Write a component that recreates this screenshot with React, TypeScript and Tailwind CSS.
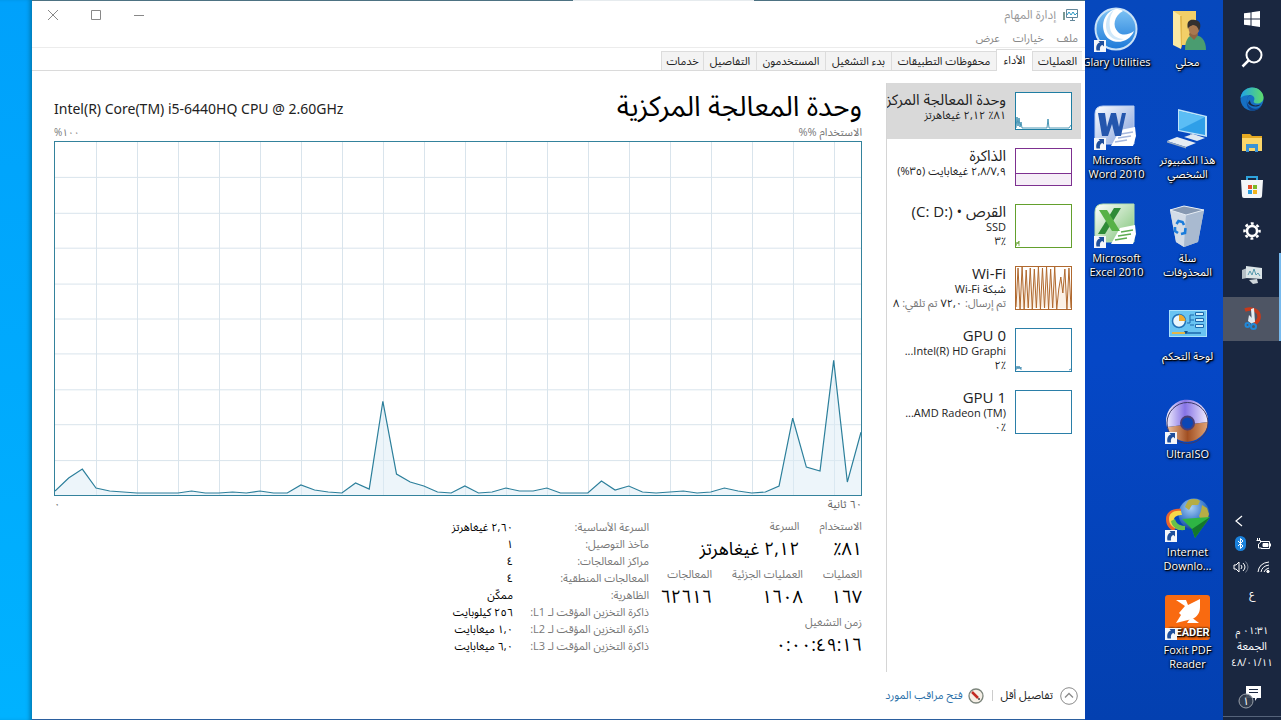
import type { ReactNode } from 'react';

const CPU = [
  4, 17, 26, 7, 4, 3, 2, 2, 2, 2, 4, 2, 2, 3, 2, 4, 2, 2, 10, 5, 3, 2, 12, 6, 94, 21, 13, 9, 3, 2,
  9, 2, 3, 7, 4, 4, 7, 2, 2, 2, 14, 5, 9, 3, 2, 3, 4, 2, 3, 7, 4, 2, 3, 9, 77, 28, 24, 135, 13, 63,
];

const WIFI = [40, 1, 42, 0, 42, 3, 41, 1, 42, 2, 41, 0, 42, 1, 41, 0, 42, 2, 41, 0, 42, 22, 10, 26, 2, 42, 1, 41];

const TABS = [
  { label: 'العمليات', width: 'w-[50px]' },
  { label: 'الأداء', width: 'w-[36px]', active: true },
  { label: 'محفوظات التطبيقات', width: 'w-[105px]' },
  { label: 'بدء التشغيل', width: 'w-[66px]' },
  { label: 'المستخدمون', width: 'w-[69px]' },
  { label: 'التفاصيل', width: 'w-[53px]' },
  { label: 'خدمات', width: 'w-[42px]' },
];

const DETAILS = [
  ['السرعة الأساسية:', '٢,٦٠ غيغاهرتز'],
  ['مآخذ التوصيل:', '١'],
  ['مراكز المعالجات:', '٤'],
  ['المعالجات المنطقية:', '٤'],
  ['الظاهرية:', 'ممكّن'],
  ['ذاكرة التخزين المؤقت لـ L1:', '٢٥٦ كيلوبايت'],
  ['ذاكرة التخزين المؤقت لـ L2:', '١,٠ ميغابايت'],
  ['ذاكرة التخزين المؤقت لـ L3:', '٦,٠ ميغابايت'],
];

function Shortcut() {
  return (
    <g>
      <rect x="0" y="33" width="12" height="12" fill="#f4f6fa" />
      <path d="M2.500 43.500c-1-4.500 1-7.500 3.500-8L4.500 34H10v5.500L8.500 38c-2 .5-3 2-2.500 5.500z" fill="#1f4f9c" />
    </g>
  );
}

function GlaryIcon() {
  return (
    <svg width="46" height="46" viewBox="0 0 46 46">
      <defs>
        <linearGradient id="gl" x1="0" y1="0" x2="0" y2="1">
          <stop offset="0" stopColor="#7fc4f5" />
          <stop offset="1" stopColor="#1c79d8" />
        </linearGradient>
      </defs>
      <circle cx="22" cy="22" r="20.500" fill="url(#gl)" stroke="#c9e2f7" strokeWidth="2" />
      <path d="M22 2C8 5 5 24 15 32c9 6 21 2 25-8-5 4-12 5-16 1-6-6-4-16 5-21-2-1.500-5-2-7-2z" fill="#fff" />
      <path d="M20 3C11 9 9 23 17 30c3 3 9 4 13 2-7 0-13-4-14-11-1-7 0-13 4-18z" fill="#cfe8fa" />
      <Shortcut />
    </svg>
  );
}

function UserFolderIcon() {
  return (
    <svg width="46" height="46" viewBox="0 0 46 46">
      <path d="M8 4h23v34H8z" fill="#f2cf68" />
      <path d="M8 4l8 5v33l-8-4z" fill="#fbe9a4" />
      <path d="M15 9h2v30l-1 3z" fill="#e3b94c" />
      <path d="M20 43c0-9 3-15 9-15 7 0 12 5 12 15z" fill="#4a9c70" />
      <path d="M24 28l5 5 4-5-1-4h-7z" fill="#8f6442" />
      <ellipse cx="29" cy="21" rx="5.500" ry="7" fill="#a87850" />
      <path d="M23 22c-2-8 2-10 7-9 5 0 7 5 4 11-1-4-3-6-6-6-2 1-4 1-5 4z" fill="#33302f" />
    </svg>
  );
}

function OfficeIcon({ letter }: { letter: 'W' | 'X' }) {
  const word = letter === 'W';
  return (
    <svg width="46" height="46" viewBox="0 0 46 46">
      <defs>
        <linearGradient id={`of${letter}`} x1="0" y1="0" x2="1" y2="1">
          <stop offset="0" stopColor="#fff" />
          <stop offset="1" stopColor={word ? '#7f9edb' : '#7cc274'} />
        </linearGradient>
      </defs>
      <path d="M9 1h31v38H1V9q0-8 8-8z" fill={`url(#of${letter})`} stroke={word ? '#b9cdf0' : '#b5dfae'} />
      <path d="M26 25l15-3 1 9-3 10H17z" fill="#fff" />
      <path d="M27 29l12-2M24 33l13-2M21 37l12-2" stroke={word ? '#a7b8dd' : '#5cab52'} strokeWidth="1.500" />
      {word ? (
        <path d="M4 8h7l2 14 4-14h5l3 14 3-14h4l-5 23h-6l-3-12-4 12H8z" fill="#2456ad" />
      ) : (
        <>
          <path d="M20 5h7L11 31H4z" fill="#2e8b37" />
          <path d="M5 7h8l13 21h-8z" fill="#57b147" />
        </>
      )}
      <Shortcut />
    </svg>
  );
}

function ComputerIcon() {
  return (
    <svg width="46" height="46" viewBox="0 0 46 46">
      <path d="M13 4l29 7v21l-29-6z" fill="#bfe3f8" />
      <path d="M14 6l26 6v18l-26-5z" fill="#2f9fe8" />
      <path d="M14 6l26 6-26 13z" fill="#5bbdf5" />
      <path d="M25 29l7 1.500v3l-7-1.500z" fill="#8fa6bf" />
      <path d="M19 32l9-3 12 4-8 3z" fill="#dfe8f1" />
      <path d="M2 36l10-4 19 6-10 4z" fill="#e7edf3" />
      <path d="M2 36l19 6v1.500L2 37.500z" fill="#9aacbf" />
    </svg>
  );
}

function BinIcon() {
  return (
    <svg width="46" height="46" viewBox="0 0 46 46">
      <path d="M5 7l14-4 20 4-6 32-14 5-8-5z" fill="#bccbdd" />
      <path d="M5 7l16 5-2 32-8-5z" fill="#d3dce7" />
      <path d="M21 12l18-5-6 32-14 5z" fill="#a9bad0" />
      <path d="M5 7l14-4 20 4-18 5z" fill="#8799b2" stroke="#e6edf5" />
      <path d="M11.500 21l2-3 4 1 1.500 3M10 24v4l3 2M16 31l4-1 .5-5" fill="none" stroke="#1b7cdb" strokeWidth="2.600" />
    </svg>
  );
}

function ControlPanelIcon() {
  return (
    <svg width="46" height="46" viewBox="0 0 46 46">
      <rect x="4.500" y="9.500" width="37" height="26" fill="#69c4f2" stroke="#a9e1fb" />
      <circle cx="14" cy="20" r="6.500" fill="#eaf6fd" stroke="#2173b8" strokeWidth="1.500" />
      <path d="M14 20v-6.500a6.500 6.500 0 0 1 6.500 6.500z" fill="#f0a92c" />
      <path d="M22 22h3v-8h4M25 19h4M25 24h4" fill="none" stroke="#1d69ad" />
      <path d="M30.500 11.500h8v3h-8zM30.500 17.500h8v3h-8zM30.500 23.500h8v3h-8z" fill="#cfeefc" stroke="#1d69ad" />
      <path d="M7 32h13" stroke="#e3b64a" strokeWidth="2" />
      <path d="M20 32h16" stroke="#1d69ad" strokeWidth="1.500" />
      <path d="M19 30h4l-2 3z" fill="#124f8a" />
    </svg>
  );
}

function DiscIcon() {
  return (
    <svg width="46" height="46" viewBox="0 0 46 46">
      <defs>
        <linearGradient id="dt" x1="0" y1="0" x2="1" y2="0">
          <stop offset="0" stopColor="#f3f1fd" />
          <stop offset=".45" stopColor="#8673e6" />
          <stop offset="1" stopColor="#f1eefc" />
        </linearGradient>
        <linearGradient id="db" x1="0" y1="0" x2="1" y2="0">
          <stop offset="0" stopColor="#f0c19b" />
          <stop offset=".5" stopColor="#a14f22" />
          <stop offset="1" stopColor="#e2a577" />
        </linearGradient>
      </defs>
      <path d="M2 28a21 21 0 1 1 41-5z" fill="url(#dt)" />
      <path d="M2 28l41-5a21 21 0 0 1-41 5z" fill="url(#db)" />
      <circle cx="22.500" cy="24" r="20.500" fill="none" stroke="#3d3a68" />
      <circle cx="22.500" cy="24" r="6.500" fill="#0b46b5" stroke="#4a3f78" strokeWidth="2" />
      <Shortcut />
    </svg>
  );
}

function DownloadManagerIcon() {
  return (
    <svg width="46" height="46" viewBox="0 0 46 46">
      <defs>
        <radialGradient id="ge" cx=".4" cy=".3" r=".8">
          <stop offset="0" stopColor="#a8cff5" />
          <stop offset=".6" stopColor="#3474c8" />
          <stop offset="1" stopColor="#16386f" />
        </radialGradient>
      </defs>
      <circle cx="29" cy="17" r="15.500" fill="url(#ge)" />
      <path d="M24 3c4-2 9-1 11 1l-2 4-6 0-3 5-4-3c1-3 2-5 4-7zM37 8l5 3 2 6-2 7-5 1-3-6 2-5z" fill="#b5ad45" />
      <path d="M16 12C8 11 1 15 1 22c0 6 3 10 8 12l3-6c-4-1-6-3-5-6 1-5 5-6 9-6z" fill="#e8632e" />
      <path d="M16 14C9 13 4 16 4 22c0 6 4 9 11 11l2-4c-6-1-9-3-8-7 1-3 4-4 8-4z" fill="#f8d748" />
      <path d="M6 24c1 6 6 10 14 9v-4c-6 0-9-3-10-7z" fill="#69c04a" />
      <path d="M17 22l28-2-15 21-3-9z" fill="#2eb544" />
      <path d="M45 20L30 41l-3-9z" fill="#13782a" />
      <Shortcut />
    </svg>
  );
}

function FoxitIcon() {
  return (
    <svg width="46" height="46" viewBox="0 0 46 46">
      <rect width="45" height="45" rx="3" fill="#f96a10" />
      <path d="M11 5h10l2 5 12-6v8c0 6-3 10-8 12L11 28l5-8-2-2 6-7z" fill="#fff" />
      <path d="M26 22l8 6H22z" fill="#fff" />
      <text x="24" y="41" textAnchor="middle" fill="#fff" fontSize="11" fontWeight="700" fontFamily="Roboto, sans-serif">READER</text>
      <Shortcut />
    </svg>
  );
}

function DesktopItem({ icon, label, dir = 'ltr' }: { icon: ReactNode; label: ReactNode; dir?: string }) {
  return (
    <button
      dir={dir}
      className="flex h-[98px] w-[71px] flex-col items-center gap-[2px] pt-[7px] text-center text-[11px] leading-[14px] text-white [text-shadow:1px_1px_1px_#000,1px_1px_3px_#000,0_0_2px_#000]"
    >
      {icon}
      <span className="whitespace-nowrap">{label}</span>
    </button>
  );
}

function TaskButton({ label, children, state = '' }: { label: string; children: ReactNode; state?: string }) {
  return (
    <button aria-label={label} className={`flex h-[44px] items-center justify-center ${state}`}>
      {children}
    </button>
  );
}

function Taskbar() {
  return (
    <aside className="flex w-[58px] shrink-0 flex-col bg-[#1a2740] text-[11px] text-white">
      <button aria-label="ابدأ" className="flex h-[38px] items-center justify-center">
        <svg width="16" height="16" viewBox="0 0 16 16" fill="#fff">
          <path d="M0 2.300L6.500 1.400v6.100H0zM7.500 1.200L16 0v7.500H7.500zM0 8.500h6.500v6.100L0 13.700zM7.500 8.500H16V16l-8.500-1.200z" />
        </svg>
      </button>
      <button aria-label="بحث" className="flex h-[37px] items-center justify-center">
        <svg width="22" height="22" viewBox="0 0 22 22" fill="none" stroke="#fff" strokeWidth="2">
          <circle cx="13" cy="9" r="7.500" />
          <path d="M7.500 14.500L1.500 20.500" strokeWidth="2.500" />
        </svg>
      </button>
      <div className="h-[2px]" />
      <TaskButton label="Edge">
        <svg width="24" height="24" viewBox="0 0 24 24">
          <defs>
            <linearGradient id="ed" x1="0" y1="0" x2="1" y2="0">
              <stop offset="0" stopColor="#1fa3e6" />
              <stop offset="1" stopColor="#5fdc6a" />
            </linearGradient>
          </defs>
          <circle cx="12" cy="12" r="11.500" fill="#1670c4" />
          <path d="M.6 11C1.500 4 7 .5 12 .5c7 0 11.500 5 11.500 10 0 4-3 6-6.500 6-3 0-4-1.500-3-3 1.500-3-1-5.500-4-5.500C6 8 2 9 .6 11z" fill="url(#ed)" />
          <path d="M7 13c0-3 2-5 4-5-5 1-6 10 1 13 4 2 8 0 10-3-2 4-6 6-10 5.500-4-1-6-5-5-10.500z" fill="#0d4591" />
          <path d="M10 13c0 5 5 7 11 4-3 4-11 3-13-1z" fill="#1a2740" />
        </svg>
      </TaskButton>
      <TaskButton label="مستكشف الملفات">
        <svg width="22" height="20" viewBox="0 0 22 20">
          <path d="M1 1h8l2 2h10v15H1z" fill="#e5a922" />
          <path d="M1 5h20v13H1z" fill="#fbd66a" />
          <path d="M5 11h12v8h-3v-4H8v4H5z" fill="#3a93d6" />
        </svg>
      </TaskButton>
      <TaskButton label="المتجر">
        <svg width="22" height="22" viewBox="0 0 22 22">
          <path d="M6 5V1h10v4" fill="none" stroke="#2ea3dd" strokeWidth="2" />
          <path d="M0 4h22l-1 16q0 2-2 2H3q-2 0-2-2z" fill="#f4f6f8" />
          <path d="M7 9h4v4H7z" fill="#e9512a" />
          <path d="M12 9h4v4h-4z" fill="#7db928" />
          <path d="M7 14h4v4H7z" fill="#2b9fdf" />
          <path d="M12 14h4v4h-4z" fill="#f3b41b" />
        </svg>
      </TaskButton>
      <TaskButton label="الإعدادات">
        <svg width="18" height="18" viewBox="0 0 18 18" fill="none" stroke="#fff">
          <circle cx="9" cy="9" r="5" strokeWidth="2.500" />
          <circle cx="9" cy="9" r="7.500" strokeWidth="2.500" strokeDasharray="2.900 2.990" strokeDashoffset="1.450" />
        </svg>
      </TaskButton>
      <TaskButton label="إدارة المهام" state="border-l-2 border-l-transparent border-r-2 border-r-[#76b9ed]">
        <svg width="22" height="20" viewBox="0 0 22 20">
          <path d="M1 5l5-2v10l-5 1z" fill="#b4bec5" />
          <path d="M5 1l16 2v11L5 13z" fill="#dbe5e8" />
          <path d="M7 10l2-4 2 4 2-6 2 6 2-2 2 3" fill="none" stroke="#5799ad" />
          <path d="M8 15l8-1 1 4-5 1z" fill="#cfd6da" />
        </svg>
      </TaskButton>
      <TaskButton label="أداة القطع" state="border-l-2 border-l-[#4e5564] border-r-2 border-r-[#76b9ed] bg-[#4e5564]">
        <svg width="18" height="24" viewBox="0 0 18 24">
          <path d="M2 3c8-3 15 1 14 8-1 4-3 5-5 6" fill="none" stroke="#c63a1b" strokeWidth="3.500" />
          <path d="M8 2l3-1 1 14-3 1z" fill="#e5edf2" />
          <path d="M6 8l4 4-1 5-4-3z" fill="#dfe8ef" />
          <circle cx="4.500" cy="18" r="2" fill="none" stroke="#2187d6" strokeWidth="2" />
          <circle cx="10.500" cy="19.500" r="2.500" fill="none" stroke="#2187d6" strokeWidth="2" />
        </svg>
      </TaskButton>

      <div className="mt-auto flex flex-col items-center">
        <button aria-label="إظهار الأيقونات المخفية" className="mb-[7px] mr-[26px] flex h-[16px] items-center">
          <svg width="8" height="12" viewBox="0 0 8 12" fill="none" stroke="#fff" strokeWidth="1.200">
            <path d="M7 1L1 6l6 5" />
          </svg>
        </button>
        <div dir="ltr" className="grid grid-cols-2 place-items-center gap-x-[7px] gap-y-[8px]">
          <svg width="13" height="16" viewBox="0 0 13 16">
            <rect x="1" width="11" height="15" rx="5.500" fill="#1a82dd" />
            <path d="M4 5l5 5-2.500 2.500v-10L9 5l-5 5" fill="none" stroke="#fff" />
          </svg>
          <svg width="16" height="12" viewBox="0 0 16 12" fill="none" stroke="#fff">
            <path d="M5 3.500h8.500v7H5M14.500 5.500v3M1.500 0v2.500M3.500 0v2.500M.5 2.500h4v2l-2 1.500v4h3" />
            <path d="M7 5.500h5v3H7z" fill="#fff" />
          </svg>
          <svg width="16" height="14" viewBox="0 0 16 14" fill="none" stroke="#fff">
            <path d="M1 5h2l3-3v10L3 9H1zM8 5q2 2 0 4M10 3q4 4 0 8" />
            <path d="M12.500 1.500q5 5.500 0 11" stroke="#788091" />
          </svg>
          <svg width="14" height="14" viewBox="0 0 14 14" fill="none" stroke="#fff">
            <path d="M1 12Q2 3 12 2M4 12q1-6 8-7M7 12q1-3 5-4" />
            <circle cx="11" cy="11.500" r="1.200" fill="#fff" />
          </svg>
        </div>
        <span className="mt-[12px] leading-[16px]">ع</span>
        <time className="mt-[20px] flex flex-col items-center whitespace-nowrap text-[10px] leading-[16px]">
          <span>٠١:٣١ م</span>
          <span className="text-[11px]">الجمعة</span>
          <span>٤٨/٠١/١١</span>
        </time>
        <button aria-label="الإشعارات" className="mt-[13px] mb-[5px]">
          <svg width="28" height="28" viewBox="0 0 28 28">
            <path d="M8 3h15v12h-4l-2 3v-3H8z" fill="#fff" />
            <path d="M11 6.500h9M11 9.500h9" stroke="#1a2740" />
            <circle cx="8" cy="18" r="7" fill="#343f50" fillOpacity="0.900" stroke="#9aa1ab" />
            <text x="8" y="22" textAnchor="middle" fill="#fff" fontSize="11">١</text>
          </svg>
        </button>
        <div className="mb-[3px] w-full border-b border-[#55637a]" />
      </div>
    </aside>
  );
}

function Thumb({ color, tall, children }: { color: string; tall?: boolean; children?: ReactNode }) {
  return (
    <svg
      className={`w-[57px] shrink-0 border bg-white ${color} ${tall ? 'h-[44px]' : 'h-[38px]'}`}
      viewBox={tall ? '0 0 55 42' : '0 0 55 36'}
      fill="none"
      stroke="currentColor"
    >
      {children}
    </svg>
  );
}

function SideItem({ thumb, title, lines, active }: { thumb: ReactNode; title: ReactNode; lines: ReactNode[]; active?: boolean }) {
  return (
    <button className={`flex gap-[9px] overflow-hidden py-[9px] pr-[9px] text-right text-[#222] ${active ? 'bg-[#d9d9d9]' : ''}`}>
      {thumb}
      <span className="-my-[2px] flex h-0 min-w-0 flex-1 flex-col whitespace-nowrap">
        <span className="text-[15px] leading-[18px]">{title}</span>
        {lines.map((line, i) => (
          <span key={i} className="text-[11px] leading-[14px]">{line}</span>
        ))}
      </span>
    </button>
  );
}

function Sidebar() {
  return (
    <nav className="flex w-[195px] shrink-0 flex-col border-l border-[#d5d5d5]">
      <SideItem
        active
        title="وحدة المعالجة المركزية"
        lines={['٨١٪  ٢,١٢ غيغاهرتز']}
        thumb={
          <Thumb color="text-[#1f7ea3]">
            <path d="M0 35l1-11 1 9 1-8 1 9 1-5 1 6h25l1-9 1 9h20l2-3" strokeWidth="0.800" />
          </Thumb>
        }
      />
      <SideItem
        title="الذاكرة"
        lines={['٢,٨/٧,٩ غيغابايت (٣٥%)']}
        thumb={
          <Thumb color="text-[#7d3090]">
            <path d="M-1 24.500h57v13H-1z" fill="#f5eef7" />
          </Thumb>
        }
      />
      <SideItem
        title={<>القرص • <bdi dir="ltr">(C: D:)</bdi></>}
        lines={['SSD', '٪٣']}
        thumb={
          <Thumb tall color="text-[#63a02d]">
            <path d="M0 41l1-4 1 2 1-3v5" strokeWidth="0.800" />
          </Thumb>
        }
      />
      <SideItem
        title="Wi-Fi"
        lines={[
          'شبكة Wi-Fi',
          <span key="s" className="text-[#777]">
            تم إرسال: <b className="font-normal text-[#222]">٧٢,٠</b> تم تلقي: <b className="font-normal text-[#222]">٨</b>
          </span>,
        ]}
        thumb={
          <Thumb tall color="text-[#b0692f]">
            <polyline points={WIFI.map((v, i) => `${(i * 55) / (WIFI.length - 1)},${v}`).join(' ')} fill="#fbf1e6" />
          </Thumb>
        }
      />
      <SideItem
        title="GPU 0"
        lines={['Intel(R) HD Graphi...', '٪٢']}
        thumb={
          <Thumb tall color="text-[#2b7fa8]">
            <path d="M0 41l1-4 1 3 1-3 1 3 1-2v3M53 41l2-1" strokeWidth="0.800" />
          </Thumb>
        }
      />
      <SideItem
        title="GPU 1"
        lines={['AMD Radeon (TM)...', '٪٠']}
        thumb={<Thumb tall color="text-[#2b7fa8]" />}
      />
    </nav>
  );
}

function CpuChart() {
  const line = CPU.map((v, i) => `${(i * 806) / 59},${354 - v}`).join(' ');
  return (
    <svg className="h-[355px] w-full border border-[#34829c]" viewBox="0 0 806 354" preserveAspectRatio="none">
      {Array.from({ length: 19 }, (_, i) => (
        <path key={i} d={`M${41.5 + i * 41} 0v354`} stroke="#d9e4ec" />
      ))}
      {Array.from({ length: 9 }, (_, i) => (
        <path key={i} d={`M0 ${Math.round(35.4 * (i + 1)) + 0.5}h806`} stroke="#d9e4ec" />
      ))}
      <polygon points={`0,354 ${line} 806,354`} fill="#dcebf5" fillOpacity="0.5" />
      <polyline points={line} fill="none" stroke="#2c7f9b" strokeWidth="1.200" />
    </svg>
  );
}

function Stat({ label, value }: { label: string; value: string }) {
  return (
    <div className="whitespace-nowrap">
      <dt className="text-[11px] leading-[16px] text-[#777]">{label}</dt>
      <dd className="text-[18px] leading-[28px] text-black">{value}</dd>
    </div>
  );
}

function CpuPanel() {
  return (
    <section className="min-w-0 flex-1 pl-[22px] pr-[24px]">
      <header className="flex h-[43px] items-center justify-between whitespace-nowrap">
        <h1 className="text-[28px] leading-[40px] text-black">وحدة المعالجة المركزية</h1>
        <p dir="ltr" className="pt-[8px] font-['Noto_Sans','Open_Sans',sans-serif] text-[14px] text-[#222]">
          Intel(R) Core(TM) i5-6440HQ CPU @ 2.60GHz
        </p>
      </header>
      <div className="flex h-[15px] justify-between text-[11px] leading-[12px] text-[#777]">
        <span>الاستخدام %%</span>
        <span className="text-[10px]">١٠٠%</span>
      </div>
      <CpuChart />
      <div className="flex h-[22px] justify-between text-[11px] leading-[16px] text-[#666]">
        <span>٦٠ ثانية</span>
        <span>٠</span>
      </div>
      <div className="flex">
        <dl className="flex w-[213px] shrink-0 flex-col gap-[4px]">
          <div className="flex gap-[20px]">
            <Stat label="الاستخدام" value="٨١٪" />
            <Stat label="السرعة" value="٢,١٢ غيغاهرتز" />
          </div>
          <div className="flex gap-[20px]">
            <Stat label="العمليات" value="١٦٧" />
            <Stat label="العمليات الجزئية" value="١٦٠٨" />
            <Stat label="المعالجات" value="٦٢٦١٦" />
          </div>
          <Stat label="زمن التشغيل" value="٠:٠٠:٤٩:١٦" />
        </dl>
        <dl className="whitespace-nowrap text-[11px] leading-[17px]">
          {DETAILS.map(([name, value]) => (
            <div key={name} className="flex">
              <dt className="w-[136px] text-[#777]">{name}</dt>
              <dd className="text-black">{value}</dd>
            </div>
          ))}
        </dl>
      </div>
    </section>
  );
}

function TaskManager() {
  return (
    <main className="flex min-w-0 flex-1 flex-col border-b border-[#2b5f9e] bg-white">
      <div className="flex h-px bg-[#4d7282]">
        <span className="mr-[331px] w-[181px] bg-[#e6ebee]" />
      </div>
      <header className="flex h-[27px] items-center pr-[7px] pl-[15px] text-[12px] text-[#999]">
        <svg width="16" height="14" viewBox="0 0 16 14" fill="none">
          <path d="M4.500 1.500h11v8h-11zM8 12.500h5M10.500 10v2" stroke="#63879a" />
          <path d="M5 7l2-3 2 3 2-3 2 3 2-2" stroke="#2c9ac4" />
          <path d="M1 4h2v8H1z" fill="#7d9a94" />
        </svg>
        <h2 className="mr-[6px]">إدارة المهام</h2>
        <div className="mr-auto flex items-center gap-[31px]">
          <button aria-label="تصغير">
            <svg width="12" height="12" stroke="#888"><path d="M1 6.500h10" /></svg>
          </button>
          <button aria-label="تكبير">
            <svg width="12" height="12" stroke="#888" fill="none"><path d="M1.500 1.500h9v9h-9z" /></svg>
          </button>
          <button aria-label="إغلاق">
            <svg width="12" height="12" stroke="#888"><path d="M1 1l10 10M11 1L1 11" /></svg>
          </button>
        </div>
      </header>
      <nav className="flex h-[20px] items-center gap-[13px] border-b border-[#ececec] pr-[7px] text-[11px] leading-[18px] text-[#888]">
        <button>ملف</button>
        <button>خيارات</button>
        <button>عرض</button>
      </nav>
      <div className="flex h-[23px] items-end border-b border-[#dadada] pr-[3px]">
        {TABS.map((t) => (
          <button
            key={t.label}
            className={`shrink-0 whitespace-nowrap border-l border-t border-[#dcdcdc] text-[11px] leading-[18px] text-[#222] ${t.width} ${
              t.active ? '-mb-px h-[22px] bg-white pb-[2px]' : 'h-[19px] bg-[#f3f3f3]'
            }`}
          >
            {t.label}
          </button>
        ))}
      </div>
      <div className="flex flex-1 pr-[4px] pt-[12px]">
        <Sidebar />
        <CpuPanel />
      </div>
      <footer className="flex h-[47px] items-center pr-[7px] text-[11px]">
        <button className="flex items-center gap-[7px] text-[#222]">
          <svg width="18" height="18" viewBox="0 0 18 18" fill="none" stroke="#8a8a8a">
            <circle cx="9" cy="9" r="8.300" />
            <path d="M5 10.500l4-4 4 4" strokeWidth="1.300" />
          </svg>
          تفاصيل أقل
        </button>
        <span className="mx-[8px] h-[11px] border-r border-[#ccc]" />
        <a href="#monitor" className="flex items-center gap-[5px] text-[#2a6fa8]">
          <svg width="16" height="16" viewBox="0 0 16 16">
            <circle cx="8" cy="8" r="7" fill="#f5efe6" stroke="#7c857c" strokeWidth="1.300" />
            <path d="M4 4l6 6" stroke="#c22a22" strokeWidth="2.500" />
            <circle cx="11" cy="11" r="1" fill="#444" />
          </svg>
          فتح مراقب المورد
        </a>
      </footer>
    </main>
  );
}

export default function App() {
  return (
    <div
      dir="rtl"
      className="flex min-h-screen overflow-hidden font-['Open_Sans','Noto_Sans','Noto_Sans_Arabic','DejaVu_Sans',sans-serif]"
    >
      <Taskbar />
      <div className="flex w-[138px] shrink-0 bg-linear-to-b from-[#0648bd] via-[#0547c6] to-[#0340b0]">
        <div className="flex w-[71px] shrink-0 flex-col">
          <DesktopItem dir="rtl" icon={<UserFolderIcon />} label="محلي" />
          <DesktopItem dir="rtl" icon={<ComputerIcon />} label={<>هذا الكمبيوتر<br />الشخصي</>} />
          <DesktopItem dir="rtl" icon={<BinIcon />} label={<>سلة<br />المحذوفات</>} />
          <DesktopItem dir="rtl" icon={<ControlPanelIcon />} label="لوحة التحكم" />
          <DesktopItem icon={<DiscIcon />} label="UltraISO" />
          <DesktopItem icon={<DownloadManagerIcon />} label={<>Internet<br />Downlo...</>} />
          <DesktopItem icon={<FoxitIcon />} label={<>Foxit PDF<br />Reader</>} />
        </div>
        <div className="flex w-[71px] shrink-0 flex-col">
          <DesktopItem icon={<GlaryIcon />} label="Glary Utilities" />
          <DesktopItem icon={<OfficeIcon letter="W" />} label={<>Microsoft<br />Word 2010</>} />
          <DesktopItem icon={<OfficeIcon letter="X" />} label={<>Microsoft<br />Excel 2010</>} />
        </div>
      </div>
      <TaskManager />
      <div className="w-[32px] shrink-0 bg-linear-to-b from-[#00a1fb] to-[#00b2ff] shadow-[inset_-4px_0_4px_-2px_#0077b0]" />
    </div>
  );
}
